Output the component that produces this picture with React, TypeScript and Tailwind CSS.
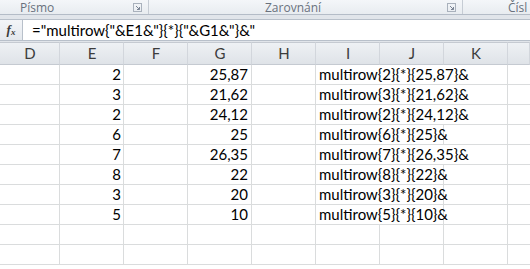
import React from 'react';

const rows: [number, string][] = [
  [2, '25,87'],
  [3, '21,62'],
  [2, '24,12'],
  [6, '25'],
  [7, '26,35'],
  [8, '22'],
  [3, '20'],
  [5, '10'],
];

const cols = ['D', 'E', 'F', 'G', 'H', 'I', 'J', 'K', ''];
const cellFont = { fontFamily: 'Lato, "Liberation Sans", sans-serif' };

// ribbon group launcher (small square with arrow)
const Launcher = () => (
  <svg width="9" height="9" viewBox="0 0 9 9" className="shrink-0">
    <rect x="0.5" y="0.5" width="8" height="8" fill="none" stroke="#a9b1bc" />
    <path d="M3 3 L6.5 6.5 M6.5 4 V6.5 H4" stroke="#7a8494" strokeWidth="1" fill="none" />
  </svg>
);

export default function App() {
  return (
    <div className="w-[530px] h-[269px] overflow-hidden bg-white select-none">
      {/* ribbon group labels */}
      <div className="h-[14px] flex bg-gradient-to-b from-[#f4f6f9] to-[#e8ecf0] text-[12px] leading-[13px] text-[#69717d]" style={{ fontFamily: '"Open Sans", "Noto Sans", sans-serif' }}>
        <div className="w-[149px] flex items-center border-r border-[#c6ccd4] pl-[20px] pr-[6px]">
          <span className="flex-1">Písmo</span>
          <Launcher />
        </div>
        <div className="w-[314px] flex items-center border-r border-[#c6ccd4] pl-[116px] pr-[6px]">
          <span className="flex-1">Zarovnání</span>
          <Launcher />
        </div>
        <div className="flex-1 flex items-center pl-[45px]">Čísl</div>
      </div>
      <div className="h-[5px] border-t border-[#b4bcc7] bg-[#e1e5ea]" />

      {/* formula bar */}
      <div className="h-[22px] flex border-y border-[#b8c0ca] bg-white">
        <div className="w-[23px] flex items-center justify-center border-r border-[#b8c0ca] bg-gradient-to-b from-[#f3f5f8] to-[#e4e8ed]">
          <span className="italic font-bold text-[13px] text-[#3b3b3b]" style={{ fontFamily: '"Liberation Serif", serif' }}>
            f<span className="text-[9px] align-[-1px]">x</span>
          </span>
        </div>
        <div className="flex-1 pl-[9px] flex items-center text-[15px] text-black" style={cellFont}>
          ="multirow{'{'}"&amp;E1&amp;"{'}'}{'{'}*{'}'}{'{'}"&amp;G1&amp;"{'}'}&amp;"
        </div>
      </div>
      <div className="h-[1px] bg-[#e1e5ea]" />

      {/* sheet */}
      <div className="grid grid-cols-[60px_repeat(7,64px)_22px]" style={cellFont}>
        {cols.map((c, i) => (
          <div
            key={c + i}
            className="h-[23px] border-y border-r border-y-[#c5cad1] border-r-[#d2d6dc] bg-gradient-to-b from-[#eef1f4] to-[#dfe3e8] flex items-center justify-center text-[15px] text-[#3c3c3c] pl-[1px]"
          >
            {c}
          </div>
        ))}
        {Array.from({ length: 10 }).map((_, r) => {
          const d = rows[r];
          const label = d ? `multirow{${d[0]}}{*}{${d[1]}}&` : '';
          const span = d ? (label.length > 20 ? 3 : 2) : 1;
          return (
            <React.Fragment key={r}>
              <div className="h-[20px] border-b border-r border-[#dadcdd]" />
              <div className="h-[20px] border-b border-r border-[#dadcdd] flex items-center justify-end pr-[2px] text-[15px] leading-none">
                {d ? d[0] : ''}
              </div>
              <div className="h-[20px] border-b border-r border-[#dadcdd]" />
              <div className="h-[20px] border-b border-r border-[#dadcdd] flex items-center justify-end pr-[3px] text-[15px] leading-none">
                {d ? d[1] : ''}
              </div>
              <div className="h-[20px] border-b border-r border-[#dadcdd]" />
              {d ? (
                <div
                  className={`h-[20px] border-b border-r border-[#dadcdd] flex items-center pl-[3px] text-[15px] leading-none whitespace-nowrap ${span === 3 ? 'col-span-3' : 'col-span-2'}`}
                >
                  {label}
                </div>
              ) : (
                <>
                  <div className="h-[20px] border-b border-r border-[#dadcdd]" />
                  <div className="h-[20px] border-b border-r border-[#dadcdd]" />
                  <div className="h-[20px] border-b border-r border-[#dadcdd]" />
                </>
              )}
              {d && span === 2 ? <div className="h-[20px] border-b border-r border-[#dadcdd]" /> : null}
              <div className="h-[20px] border-b border-[#dadcdd]" />
            </React.Fragment>
          );
        })}
      </div>
    </div>
  );
}
